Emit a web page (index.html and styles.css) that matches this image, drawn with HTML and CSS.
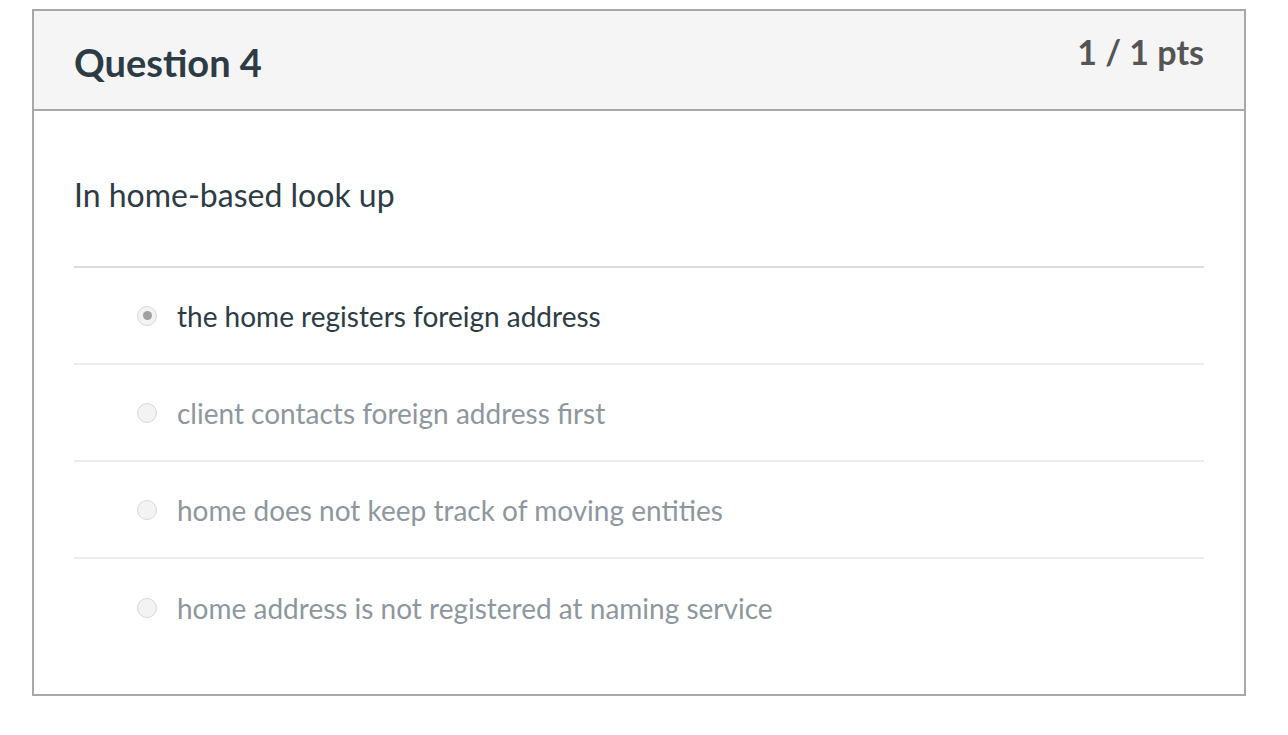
FILE: index.html
```html
<!DOCTYPE html>
<html>
<head>
<meta charset="utf-8">
<link rel="stylesheet" href="styles.css">
</head>
<body>
<div class="question">
  <div class="header">
    <h2 class="title">Question 4</h2>
    <div class="pts">1 / 1 pts</div>
  </div>
  <div class="content">
    <div class="text">In home-based look up</div>
    <div class="answers">
      <div class="answer selected"><span class="radio"></span><span class="label">the home registers foreign address</span></div>
      <div class="answer"><span class="radio"></span><span class="label">client contacts foreign address first</span></div>
      <div class="answer"><span class="radio"></span><span class="label">home does not keep track of moving entities</span></div>
      <div class="answer"><span class="radio"></span><span class="label">home address is not registered at naming service</span></div>
    </div>
  </div>
</div>
</body>
</html>
```
FILE: styles.css
```css
html, body {
  margin: 0;
  padding: 0;
  background: #ffffff;
}
body {
  font-family: Lato, "Open Sans", sans-serif;
  color: #2d3b45;
}
.question {
  box-sizing: border-box;
  margin: 9px 0 0 32px;
  width: 1214px;
  height: 687px;
  border: 2px solid #a8a8a8;
}
.header {
  box-sizing: border-box;
  height: 100px;
  background: #f5f5f5;
  border-bottom: 2px solid #a8a8a8;
  display: flex;
  justify-content: space-between;
  align-items: flex-start;
  padding: 0 40px;
}
.title {
  margin: 0;
  padding-top: 29px;
  font-size: 38px;
  font-weight: 700;
  line-height: 44px;
  color: #2d3b45;
}
.pts {
  padding-top: 21px;
  font-size: 34px;
  font-weight: 700;
  line-height: 40px;
  color: #555555;
}
.content {
  padding: 0 40px;
}
.text {
  box-sizing: border-box;
  height: 157px;
  padding-top: 65px;
  font-size: 32px;
  line-height: 38px;
  border-bottom: 2px solid #dcdcdc;
}
.answer {
  box-sizing: border-box;
  height: 97px;
  display: flex;
  align-items: center;
  padding-left: 63px;
  border-bottom: 2px solid #ececec;
  font-size: 28px;
  line-height: 34px;
  color: #8e979e;
}
.answer:last-child {
  border-bottom: none;
}
.answer.selected {
  color: #2d3b45;
}
.radio {
  box-sizing: border-box;
  width: 20px;
  height: 20px;
  border-radius: 50%;
  border: 1px solid #d8d8d8;
  background: #f3f3f3;
  margin-right: 20px;
  display: flex;
  align-items: center;
  justify-content: center;
  flex: none;
}
.answer.selected .radio::after {
  content: "";
  width: 9px;
  height: 9px;
  border-radius: 50%;
  background: #a0a0a0;
}
```
